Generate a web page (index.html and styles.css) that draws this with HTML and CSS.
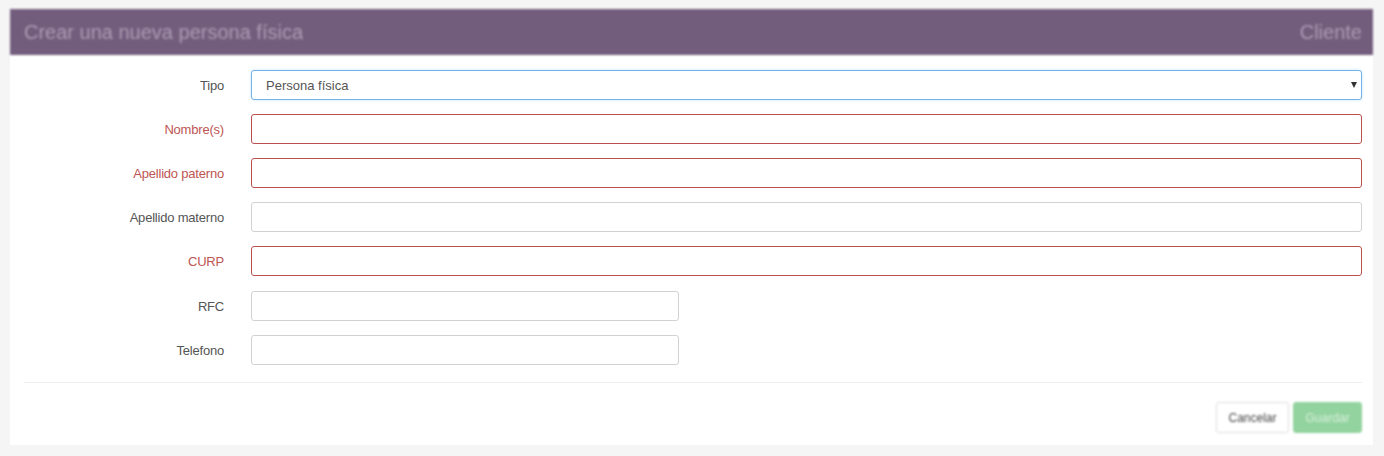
FILE: index.html
```html
<!DOCTYPE html>
<html>
	<head>
		<link rel="stylesheet" href="styles.css">
	</head>
	<body>

	<div class="card">
		<div class="card-header">
			<span class="title">Crear una nueva persona física</span>
			<span class="subtitle">Cliente</span>
		</div>

		<form class="form">
			<div class="row">
				<label>Tipo</label>
				<div class="select-wrap">
					<select class="field focus">
						<option>Persona física</option>
						<option>Persona moral</option>
					</select>
				</div>
			</div>
			<div class="row required">
				<label>Nombre(s)</label>
				<input class="field" type="text">
			</div>
			<div class="row required">
				<label>Apellido paterno</label>
				<input class="field" type="text">
			</div>
			<div class="row">
				<label>Apellido materno</label>
				<input class="field" type="text">
			</div>
			<div class="row required wide-gap">
				<label>CURP</label>
				<input class="field" type="text">
			</div>
			<div class="row">
				<label>RFC</label>
				<input class="field short" type="text">
			</div>
			<div class="row">
				<label>Telefono</label>
				<input class="field short" type="text">
			</div>
		</form>

		<hr />

		<div class="actions">
			<button class="btn btn-default" type="button">Cancelar</button>
			<button class="btn btn-success" type="button" disabled>Guardar</button>
		</div>
	</div>

	</body>
</html>
```

FILE: styles.css
```css
body {
	margin: 0;
	font-family: "Liberation Sans", Arial, sans-serif;
	background-color: #f5f5f5;
	color: #555555;
}

.card {
	margin: 9px 11px 0 10px;
	background-color: white;
	padding-bottom: 12px;
}

.card-header {
	height: 46px;
	display: flex;
	align-items: center;
	justify-content: space-between;
	padding: 0 11px 0 14px;
	background-color: #735d7d;
	color: #ab9cb4;
	font-size: 20px;
	filter: blur(0.8px);
}

.form {
	padding: 15px 11px 0 0;
}

.row {
	display: grid;
	grid-template-columns: 214px 1fr;
	column-gap: 27px;
	align-items: center;
	margin-bottom: 14px;
}
.row.wide-gap {
	margin-bottom: 15px;
}
.row:last-child {
	margin-bottom: 0;
}

.row label {
	text-align: right;
	font-size: 13px;
	letter-spacing: -0.2px;
	color: #555555;
}
.row.required label {
	color: #bd5553;
}

.field {
	box-sizing: border-box;
	height: 30px;
	width: 100%;
	margin: 0;
	padding: 4px 14px;
	border: 1px solid #d2d2d2;
	border-radius: 3px;
	background-color: white;
	font-family: "Liberation Sans", Arial, sans-serif;
	font-size: 13px;
	color: #555555;
	outline: none;
}
.field.short {
	width: 428px;
}
.row.required .field {
	border-color: #b9504e;
}
.field.focus {
	border-color: #70b2ea;
	box-shadow: 0 0 3px rgba(102, 175, 233, 0.35);
}

.select-wrap {
	position: relative;
}
.select-wrap select {
	appearance: none;
	-webkit-appearance: none;
}
.select-wrap::after {
	content: "";
	position: absolute;
	right: 5px;
	top: 12px;
	border-left: 3px solid transparent;
	border-right: 3px solid transparent;
	border-top: 6px solid #333333;
}

hr {
	margin: 17px 11px 0 14px;
	border: 0;
	border-top: 1px solid #eeeeee;
}

.actions {
	display: flex;
	justify-content: flex-end;
	gap: 4px;
	padding: 19px 11px 0 0;
	filter: blur(0.8px);
}

.btn {
	height: 31px;
	padding: 0 11px;
	border-radius: 3px;
	font-family: "Liberation Sans", Arial, sans-serif;
	font-size: 12px;
}
.btn-default {
	width: 73px;
	background-color: white;
	border: 1px solid #dddddd;
	color: #444444;
}
.btn-success {
	background-color: #93d39f;
	border: 1px solid #93d39f;
	color: #d8f0dc;
	width: 69px;
}
```
